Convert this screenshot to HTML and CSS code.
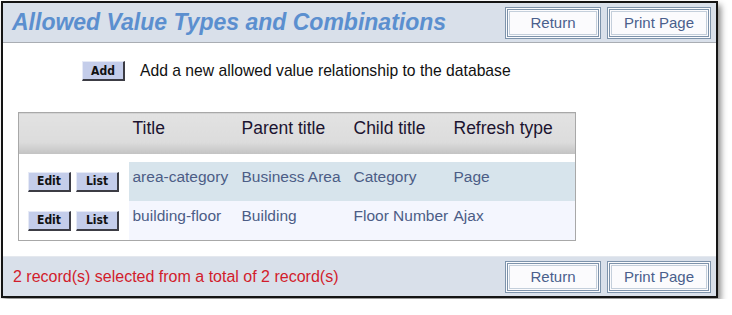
FILE: index.html
```html
<!DOCTYPE html>
<html lang="en">
<head>
    <meta charset="UTF-8">
    <title>Allowed Value Types and Combinations</title>
    <link rel="stylesheet" href="styles.css">
</head>
<body>
    <div class="frame">
        <div class="bar top">
            <h1>Allowed Value Types and Combinations</h1>
            <div class="actions">
                <button class="nav">Return</button>
                <button class="nav">Print Page</button>
            </div>
        </div>

        <div class="content">
            <div class="add-row">
                <button class="small">Add</button>
                <span>Add a new allowed value relationship to the database</span>
            </div>

            <table class="list">
                <colgroup>
                    <col class="c-tools">
                    <col class="c-title">
                    <col class="c-parent">
                    <col class="c-child">
                    <col>
                </colgroup>
                <thead>
                    <tr>
                        <th></th>
                        <th>Title</th>
                        <th>Parent title</th>
                        <th>Child title</th>
                        <th>Refresh type</th>
                    </tr>
                </thead>
                <tbody>
                    <tr class="spacer"><td colspan="5"></td></tr>
                    <tr class="odd">
                        <td class="tools"><button class="small">Edit</button><button class="small">List</button></td>
                        <td>area-category</td>
                        <td>Business Area</td>
                        <td>Category</td>
                        <td>Page</td>
                    </tr>
                    <tr class="even">
                        <td class="tools"><button class="small">Edit</button><button class="small">List</button></td>
                        <td>building-floor</td>
                        <td>Building</td>
                        <td>Floor Number</td>
                        <td>Ajax</td>
                    </tr>
                </tbody>
            </table>
        </div>

        <div class="bar bottom">
            <span class="count">2 record(s) selected from a total of 2 record(s)</span>
            <div class="actions">
                <button class="nav">Return</button>
                <button class="nav">Print Page</button>
            </div>
        </div>
    </div>
</body>
</html>
```

FILE: styles.css
```css
body {
    margin: 0;
    padding: 1px;
    font-family: "Liberation Sans", Arial, sans-serif;
    background: #fff;
}
.frame {
    width: 713px;
    border: 2px solid #141414;
    background: #fff;
    box-shadow: 3px 4px 6px rgba(0, 0, 0, 0.45);
}
.bar {
    display: flex;
    align-items: center;
    justify-content: space-between;
    background: #d9e0ea;
    height: 39px;
    padding: 0 5px 0 9px;
}
.bar.top {
    border-bottom: 1px solid #a9adb3;
}
.bar.bottom {
    border-top: 1px solid #e4e8ee;
    padding-left: 10px;
}
h1 {
    margin: 0;
    font-size: 23px;
    font-style: italic;
    font-weight: bold;
    color: #5b8fcf;
}
.actions {
    display: flex;
    gap: 6px;
}
.nav {
    font-family: "Liberation Sans", Arial, sans-serif;
    font-size: 15px;
    color: #4a5f8c;
    background: #fbfbfd;
    height: 32px;
    padding: 0;
    border: 3px double #7d93ab;
    outline: 1px solid #c4cfdb;
    outline-offset: -5px;
}
.nav:first-child {
    width: 96px;
}
.nav:last-child {
    width: 104px;
}
.content {
    padding: 18px 0 15px 15px;
}
.add-row {
    display: flex;
    align-items: center;
    gap: 15px;
    padding-left: 64px;
    font-size: 15.7px;
    color: #111;
}
.small {
    font-family: Tahoma, "DejaVu Sans Condensed", "DejaVu Sans", sans-serif;
    font-size: 12px;
    font-weight: bold;
    color: #111;
    background: #c4cdea;
    width: 43px;
    height: 20px;
    padding: 0;
    border: 0;
    border-right: 2px solid #3c3c44;
    border-bottom: 2px solid #3c3c44;
    border-top: 1px solid #e6eaf6;
    border-left: 1px solid #e6eaf6;
}
.list {
    margin-top: 31px;
    width: 558px;
    table-layout: fixed;
    border: 1px solid #a8a8a8;
    border-collapse: collapse;
    font-size: 15.5px;
}
.c-tools {
    width: 110px;
}
.c-title {
    width: 109px;
}
.c-parent {
    width: 112px;
}
.c-child {
    width: 100px;
}
.list th {
    height: 30px;
    padding: 0 4px 11px;
    text-align: left;
    font-weight: normal;
    font-size: 17.5px;
    color: #1c1430;
    background: linear-gradient(#e2e2e2, #dcdcdc 70%, #c2c2c2);
}
.list td {
    height: 29px;
    padding: 0 4px 10px;
    color: #4c5d86;
    white-space: nowrap;
}
.list .spacer td {
    height: 8px;
    padding: 0;
    background: #fff;
}
.list td.tools {
    background: #fff;
    padding: 0 0 0 9px;
}
.list td.tools .small {
    margin-right: 5px;
}
.odd td {
    background: #d7e4ec;
}
.even td {
    background: #f4f6fe;
}
.count {
    color: #d21c2c;
    font-size: 16px;
}
```
